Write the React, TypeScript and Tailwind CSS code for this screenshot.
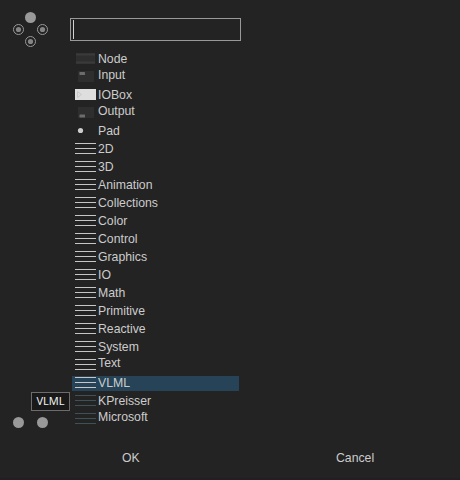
import React from 'react';

type Kind = 'node' | 'input' | 'iobox' | 'output' | 'pad' | 'category' | 'external';

interface Entry {
  label: string;
  kind: Kind;
  raised?: boolean;
  selected?: boolean;
}

const entries: Entry[] = [
  { label: 'Node', kind: 'node' },
  { label: 'Input', kind: 'input', raised: true },
  { label: 'IOBox', kind: 'iobox' },
  { label: 'Output', kind: 'output', raised: true },
  { label: 'Pad', kind: 'pad' },
  { label: '2D', kind: 'category' },
  { label: '3D', kind: 'category' },
  { label: 'Animation', kind: 'category' },
  { label: 'Collections', kind: 'category' },
  { label: 'Color', kind: 'category' },
  { label: 'Control', kind: 'category' },
  { label: 'Graphics', kind: 'category' },
  { label: 'IO', kind: 'category' },
  { label: 'Math', kind: 'category' },
  { label: 'Primitive', kind: 'category' },
  { label: 'Reactive', kind: 'category' },
  { label: 'System', kind: 'category' },
  { label: 'Text', kind: 'category', raised: true },
  { label: 'VLML', kind: 'category', selected: true },
  { label: 'KPreisser', kind: 'external' },
  { label: 'Microsoft', kind: 'external', raised: true },
];

function EntryIcon({ kind }: { kind: Kind }) {
  return (
    <svg width="21" height="18" viewBox="0 0 21 18" className="block shrink-0">
      {kind === 'node' && (
        <>
          <rect x="1" y="3" width="19" height="11" fill="#2e2e2e" />
          <rect x="1" y="3.5" width="19" height="2" fill="#3a3a3a" />
          <rect x="1" y="11.5" width="19" height="2" fill="#3a3a3a" />
        </>
      )}
      {(kind === 'input' || kind === 'output') && (
        <>
          <rect x="3" y="3" width="16" height="11" fill="#2e2e2e" />
          <rect x="4.5" y={kind === 'input' ? 4 : 10.5} width="5.5" height="3" rx="0.5" fill="#6c6c6c" />
        </>
      )}
      {kind === 'iobox' && (
        <>
          <rect x="0" y="3" width="21" height="11" fill="#dedede" />
          <path d="M2.5 5.5 L6.5 8.5 L2.5 11.5 Z" fill="none" stroke="#c8c8c8" />
        </>
      )}
      {kind === 'pad' && <circle cx="5.5" cy="8.5" r="2.6" fill="#cccccc" />}
      {(kind === 'category' || kind === 'external') && (
        <path
          d="M0 3.5H21M0 8.5H21M0 13.5H21"
          stroke={kind === 'category' ? '#c6c6c6' : '#405057'}
          strokeWidth="1"
        />
      )}
    </svg>
  );
}

function Row({ label, kind, raised, selected }: Entry) {
  return (
    <li
      className={`flex h-[18px] w-[167px] pl-[3px] ${
        selected ? 'bg-[linear-gradient(#264357,#264357)] bg-[length:100%_15px] bg-[position:0_2px] bg-no-repeat' : ''
      }`}
    >
      <EntryIcon kind={kind} />
      <span className={`ml-[2px] leading-[18px] ${raised ? '-mt-[2px]' : ''}`}>{label}</span>
    </li>
  );
}

function PinCluster() {
  return (
    <svg width="37" height="37" viewBox="0 0 37 37" className="block">
      <circle cx="18.5" cy="5.5" r="5.5" fill="#999999" />
      {[
        [6.5, 17.5],
        [30.5, 17.5],
        [18.5, 29.5],
      ].map(([cx, cy]) => (
        <g key={`${cx}-${cy}`}>
          <circle cx={cx} cy={cy} r="5" fill="none" stroke="#999999" />
          <circle cx={cx} cy={cy} r="2.6" fill="#858585" />
        </g>
      ))}
    </svg>
  );
}

export default function App() {
  return (
    <div className="flex h-[480px] w-[460px] flex-col overflow-hidden border-b-2 border-[#231e22] bg-[#232323] font-['Liberation_Sans',Arial,sans-serif] text-[12.25px] text-[#cccccc]">
      <div className="flex h-[440px]">
        <aside className="flex w-[70px] shrink-0 flex-col">
          <div className="mt-[12px] ml-[12px]">
            <PinCluster />
          </div>
          <div className="mt-[343px] ml-[31px] flex h-[19px] w-[39px] items-center justify-center border border-[#6c6c6c] bg-[#191919] font-['Noto_Sans',sans-serif] text-[11px] text-[#f0f0f0]">
            VLML
          </div>
          <div className="mt-[6px] ml-[13px] flex gap-[13px]">
            <span className="h-[11px] w-[11px] rounded-full bg-[#999999]" />
            <span className="h-[11px] w-[11px] rounded-full bg-[#999999]" />
          </div>
        </aside>
        <main>
          <div className="mt-[18px] flex h-[23px] w-[171px] items-center border border-[#999999] pl-[2px]">
            <span className="h-[19px] w-px bg-[#d0d0d0]" />
          </div>
          <ul className="mt-[9px] ml-[2px]">
            {entries.map((entry) => (
              <Row key={entry.label} {...entry} />
            ))}
          </ul>
        </main>
      </div>
      <footer className="flex leading-[18px]">
        <button className="mt-[9px] ml-[122px] w-[20px] text-left">OK</button>
        <button className="mt-[9px] ml-[194px]">Cancel</button>
      </footer>
    </div>
  );
}
